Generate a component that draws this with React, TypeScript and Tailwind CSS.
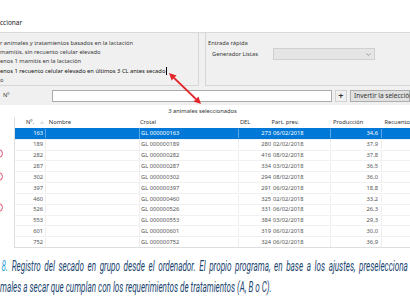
const ROWS: [number, string, number, string, string][] = [
  [163, "GL 000000163", 273, "06/02/2018", "34,6"],
  [189, "GL 000000189", 280, "02/02/2018", "37,9"],
  [282, "GL 000000282", 416, "08/02/2018", "37,8"],
  [287, "GL 000000287", 334, "03/02/2018", "36,5"],
  [302, "GL 000000302", 294, "08/02/2018", "36,0"],
  [397, "GL 000000397", 291, "06/02/2018", "18,8"],
  [460, "GL 000000460", 325, "02/02/2018", "33,2"],
  [526, "GL 000000526", 331, "06/02/2018", "26,3"],
  [553, "GL 000000553", 384, "03/02/2018", "29,3"],
  [601, "GL 000000601", 319, "06/02/2018", "30,0"],
  [752, "GL 000000752", 324, "06/02/2018", "36,9"],
];

// marks drawn round rows 282, 302 and 526 (only their right edge is in frame)
const MARK_TOPS = ["top-[149px]", "top-[172px]", "top-[203px]"];

export default function App() {
  return (
    <div className="relative flex h-[300px] w-[410px] flex-col overflow-hidden bg-white font-['Noto_Sans',sans-serif] text-[5.75px] text-[#3a3a3a]">
      {/* window title */}
      <div className="h-[33px] shrink-0 border-b border-[#d9d9d9] pt-[19px] text-[6.5px] leading-[8px] text-[#222]">
        ccionar
      </div>

      <div className="shrink-0 bg-[#f0f0f0]">
        <div className="flex h-[53px] gap-[6px]">
          <div className="w-[199px] border-r border-b border-[#d6d6d6] pt-[6px] leading-[9.2px] whitespace-nowrap">
            <div>r animales y tratamientos basados en la lactación</div>
            <div>mamitis, sin recuento celular elevado</div>
            <div>enos 1 mamitis en la lactación</div>
            <div className="flex items-center text-[#111]">
              enos 1 recuento celular elevado en últimos 3 CL antes secado
              <span className="ml-px inline-block h-[8px] w-px bg-black" />
            </div>
            <div>o</div>
          </div>
          <div className="flex-1 border-l border-b border-[#d6d6d6] pl-[2px] pt-[6px]">
            <div className="leading-[9.2px]">Entrada rápida</div>
            <div className="flex items-center pl-[4px]">
              <span className="w-[61px] whitespace-nowrap">Generador Listas</span>
              <div className="flex h-[12px] w-[102px] items-center justify-end border border-[#d0d0d0] bg-[#e5e5e5] pr-[3px]">
                <svg width="5" height="3" viewBox="0 0 5 3">
                  <polyline points="0.5,0.5 2.5,2.5 4.5,0.5" fill="none" stroke="#888" strokeWidth="0.8" />
                </svg>
              </div>
            </div>
          </div>
        </div>

        <div className="flex h-[19px] items-center whitespace-nowrap">
          <span className="w-[56px] pl-[3px]">Nº</span>
          <div className="h-[12px] w-[301px] border border-[#ababab] bg-white" />
          <div className="ml-[3px] flex h-[12px] w-[13px] items-center justify-center border border-[#d3d3d3] text-[9px] leading-none font-bold text-[#333]">
            +
          </div>
          <div className="ml-[3px] flex h-[12px] w-[60px] shrink-0 items-center border border-[#adadad] bg-[#e1e1e1] pl-[3px] text-[6.5px] text-[#333]">
            Invertir la selección
          </div>
        </div>
      </div>

      <div className="flex h-[12px] shrink-0 items-center justify-center pr-[5px] text-[#333]">
        3 animales seleccionados
      </div>

      {/* grid */}
      <div className="ml-[14px] shrink-0 border-b border-l border-[#dedede] whitespace-nowrap">
        <div className="flex h-[11px] items-center text-[#333]">
          <div className="flex w-[31px] items-center pl-[11px]">
            Nº.
            <svg className="ml-[6px]" width="4" height="3" viewBox="0 0 4 3">
              <polygon points="2,0.3 3.7,2.7 0.3,2.7" fill="none" stroke="#bbb" strokeWidth="0.5" />
            </svg>
          </div>
          <div className="w-[94px] pl-[3px]">Nombre</div>
          <div className="w-[99px] pl-[1px]">Crotal</div>
          <div className="w-[33px] pl-[3px]">DEL</div>
          <div className="w-[59px] pl-[2px]">Part. prev.</div>
          <div className="w-[51px] pl-[5px]">Producción</div>
          <div className="flex-1 pl-[6px]">Recuento</div>
        </div>
        {ROWS.map(([num, crotal, del, part, prod], i) => {
          const sel = i === 0;
          const cell = sel ? "border-r border-[#5aa6e6]" : "border-r border-[#eeeeee]";
          return (
            <div
              key={num}
              className={`flex h-[10.84px] items-center ${
                sel ? "bg-[#0078d7] text-white" : "border-t border-[#f1f1f1] text-[#555]"
              }`}
            >
              <div className={`w-[31px] pr-[2px] text-right ${cell}`}>{num}</div>
              <div className={`h-full w-[94px] ${cell}`} />
              <div className={`w-[99px] pl-[1px] ${cell}`}>{crotal}</div>
              <div className="w-[33px] pr-[1px] text-right">{del}</div>
              <div className={`w-[59px] pl-[1px] ${cell}`}>{part}</div>
              <div className={`w-[51px] pr-[3px] text-right ${cell}`}>{prod}</div>
              <div className="flex-1" />
            </div>
          );
        })}
      </div>

      {/* figure caption (justified in print, so the full line runs wide) */}
      <div className="mt-[8px] origin-left scale-x-[0.54] font-['Roboto',sans-serif] text-[15px] leading-[21.3px] whitespace-nowrap text-[#1b4670] italic">
        <div className="pl-[3px] [word-spacing:3px]">
          <span className="text-[#2a9fd8]">8.</span> Registro del secado en grupo desde el ordenador. El propio programa, en base a los ajustes, preselecciona los
        </div>
        <div>males a secar que cumplan con los requerimientos de tratamientos (A, B o C).</div>
      </div>

      {/* red annotations */}
      {MARK_TOPS.map((t) => (
        <div key={t} className={`absolute left-[-9px] h-[9px] w-[12px] rounded-full border-[1.5px] border-[#e0506e] ${t}`} />
      ))}
      <svg className="absolute left-[160px] top-[65px]" width="50" height="50" viewBox="0 0 50 50">
        <line x1="14" y1="12.9" x2="36" y2="34.1" stroke="#e3262b" strokeWidth="2" />
        <polygon points="9,8 11.6,15.4 16.5,10.4" fill="#e3262b" />
        <polygon points="41,39 33.5,36.6 38.4,31.6" fill="#e3262b" />
      </svg>
    </div>
  );
}
